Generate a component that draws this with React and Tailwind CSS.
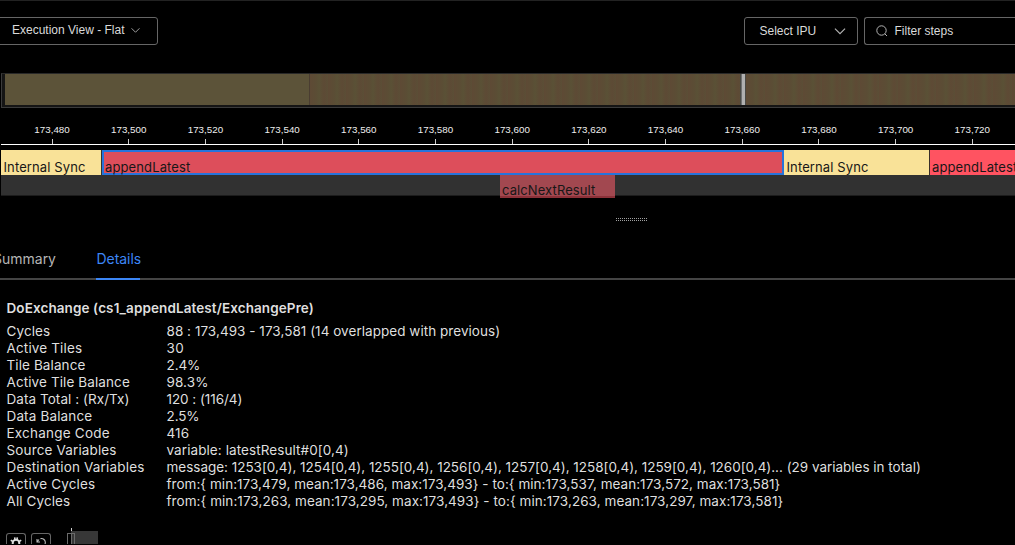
import React from "react";

const ticks = ["173,480", "173,500", "173,520", "173,540", "173,560", "173,580", "173,600", "173,620", "173,640", "173,660", "173,680", "173,700", "173,720"];

const details = [
  ["Cycles", "88 : 173,493 - 173,581 (14 overlapped with previous)", "tracking-[0.1px]", "tracking-[0.04px]"],
  ["Active Tiles", "30", "tracking-[0.15px]", "tracking-[0.5px]"],
  ["Tile Balance", "2.4%", "tracking-[0.1px]", "tracking-[-0.1px]"],
  ["Active Tile Balance", "98.3%", "tracking-[0.1px]", "tracking-[0.1px]"],
  ["Data Total : (Rx/Tx)", "120 : (116/4)", "tracking-[0.06px]", "tracking-[-0.05px]"],
  ["Data Balance", "2.5%", "tracking-[0.15px]", "tracking-[-0.1px]"],
  ["Exchange Code", "416", "tracking-[0.22px]", "tracking-[0.1px]"],
  ["Source Variables", "variable: latestResult#0[0,4)", "tracking-[0.14px]", "tracking-[0.08px]"],
  ["Destination Variables", "message: 1253[0,4), 1254[0,4), 1255[0,4), 1256[0,4), 1257[0,4), 1258[0,4), 1259[0,4), 1260[0,4)... (29 variables in total)", "tracking-[0.17px]", "tracking-[-0.017px]"],
  ["Active Cycles", "from:{ min:173,479, mean:173,486, max:173,493} - to:{ min:173,537, mean:173,572, max:173,581}", "tracking-[0.15px]", "tracking-[0.035px]"],
  ["All Cycles", "from:{ min:173,263, mean:173,295, max:173,493} - to:{ min:173,263, mean:173,297, max:173,581}", "tracking-[0.1px]", "tracking-[0.06px]"],
];

function Chevron({ className }) {
  return (
    <svg className={className} viewBox="0 0 12 8" fill="none" stroke="#b4b4b4" strokeWidth="1">
      <path d="M1.5 1.5 6 6l4.5-4.5" />
    </svg>
  );
}

function Toolbar() {
  return (
    <div className="mt-4 flex h-7 shrink-0 font-['Liberation_Sans',sans-serif] text-[12px] text-[#dadada]">
      <button className="-ml-1 flex w-[162px] items-center rounded-[3px] border border-[#666] pl-[15px] pb-[3px]">
        <span className="whitespace-nowrap">Execution View - Flat</span>
        <Chevron className="mt-px ml-[5px] h-[7px] w-[11px]" />
      </button>
      <button className="ml-[586px] flex w-[114px] items-center rounded-[3px] border border-[#666] pl-[14.5px]">
        <span className="whitespace-nowrap">Select IPU</span>
        <Chevron className="ml-[17px] h-[9px] w-[14px]" />
      </button>
      <div className="ml-1.5 flex flex-1 items-center rounded-l-[3px] border border-r-0 border-[#666] pl-[10.5px]">
        <svg className="h-3 w-3" viewBox="0 0 12 12" fill="none" stroke="#b4b4b4" strokeWidth="1">
          <circle cx="5.5" cy="5.5" r="4.7" />
          <path d="m8.8 8.8 2.2 2.2" />
        </svg>
        <span className="ml-[7px] whitespace-nowrap">Filter steps</span>
      </div>
    </div>
  );
}

function Overview() {
  return (
    <div className="mt-7 ml-px flex h-[35px] shrink-0 border border-r-0 border-t-[#292929] border-b-[#3b3b3b] border-l-[#3b3b3b] bg-[#151515] pl-[3px] pb-0.5">
      <div className="w-[304px] bg-[#5c5339]" />
      <div className="w-px bg-[#4a3d31]" />
      <div className="w-[430px] bg-[repeating-linear-gradient(90deg,#5e4a35_0px,#5b4d35_6px,#5a5136_9px,#5d4a35_14px,#5b4e36_18px)]" />
      <div className="flex w-1.5 shrink-0 border-x border-[#4a4a45] bg-[#707070] pl-px">
        <div className="flex-1 bg-[#b0b0b0]" />
      </div>
      <div className="flex-1 bg-[repeating-linear-gradient(90deg,#5e4a35_0px,#5b4d35_7px,#5a5136_10px,#5e4a35_15px,#5b4e36_19px)]" />
    </div>
  );
}

function Timeline() {
  return (
    <div className="ml-px shrink-0 overflow-hidden">
      <div className="flex h-[37px] border-b border-white pl-[12.7px] font-['Liberation_Sans',sans-serif] text-[9.8px] text-[#eee]">
        {ticks.map((t) => (
          <div key={t} className="flex w-[76.7px] shrink-0 flex-col items-center justify-between pt-[14px]">
            <span className="leading-[15px]">{t}</span>
            <span className="h-[5px] w-px bg-white/80" />
          </div>
        ))}
      </div>
      <div className="mt-[5px] flex h-[25px] overflow-hidden bg-[#313131] text-[13px] leading-[16px] tracking-[0.12px] whitespace-nowrap text-[#171717]">
        <div className="flex w-[100px] shrink-0 items-end bg-[#f9e298] pl-[2.5px]">Internal Sync</div>
        <div className="ml-px flex w-[682px] shrink-0 items-end border-2 border-[#2674dc] bg-[#dd4e5b] pl-px"><span className="-mb-0.5">appendLatest</span></div>
        <div className="flex w-[146px] shrink-0 items-end border-r border-[#382e28] bg-[#f9e298] pl-[2.5px]">Internal Sync</div>
        <div className="flex w-[86px] shrink-0 items-end bg-[#ff5361] pl-0.5">appendLatest</div>
      </div>
      <div className="flex h-[23px]">
        <div className="h-[21px] w-[499px] border-b border-[#1c1c1c] bg-[#313131]" />
        <div className="flex h-[23px] w-[115px] items-end border-b-2 border-[#8c3139] bg-[#a24850] pl-0.5 text-[13px] leading-[16px] tracking-[0.1px] whitespace-nowrap text-[#171717]"><span className="-mb-0.5">calcNextResult</span></div>
        <div className="h-[21px] flex-1 border-b border-[#1c1c1c] bg-[#313131]" />
      </div>
    </div>
  );
}

function ResizeHandle() {
  return (
    <div className="mt-5 ml-[616px] flex h-[3px] w-8 shrink-0 flex-col justify-between">
      <div className="h-px bg-[repeating-linear-gradient(90deg,#a0a0a0_0px,#a0a0a0_1px,#000_1px,#000_2px)]" />
      <div className="h-px bg-[repeating-linear-gradient(90deg,#a0a0a0_0px,#a0a0a0_1px,#000_1px,#000_2px)]" />
    </div>
  );
}

function Tabs() {
  return (
    <div className="mt-[19px] flex h-10 shrink-0 border-b-2 border-[#444] text-[14px] leading-[38px] whitespace-nowrap text-[#b5b5b5]">
      <div className="-ml-[9px] w-[65px] text-right">Summary</div>
      <div className="ml-10 h-10 w-11 border-b-2 border-[#3c86f6] pl-[0.5px] tracking-[-0.05px] text-[#3c86f6]">Details</div>
    </div>
  );
}

function Details() {
  return (
    <div className="shrink-0 pt-[18px] pl-[6.5px] text-[13.5px] text-[#dfdfdf]">
      <h2 className="h-5 leading-5 font-semibold tracking-[0.1px] whitespace-nowrap">DoExchange (cs1_appendLatest/ExchangePre)</h2>
      <dl className="mt-[5px]">
        {details.map(([label, value, labelCls, valueCls]) => (
          <div key={label} className="flex h-[17px] leading-[17px] whitespace-nowrap">
            <dt className="w-40 shrink-0"><span className={labelCls}>{label}</span></dt>
            <dd><span className={valueCls}>{value}</span></dd>
          </div>
        ))}
      </dl>
    </div>
  );
}

function BottomBar() {
  return (
    <div className="mt-[18px] flex h-[16px] shrink-0 items-end overflow-hidden pl-1.5">
      <div className="flex h-[11px] w-5 justify-center rounded-t-[3px] border border-b-0 border-[#666] pt-[3px]">
        <svg className="h-3 w-3 shrink-0" viewBox="0 0 12 12" fill="none" stroke="#ddd">
          <circle cx="6" cy="6" r="3.3" strokeWidth="2" />
          <path d="M4.7 .3 5 3M7.3 .3 7 3M.8 3.2l2 1.3M11.2 3.2l-2 1.3M1 9l1.7-1M11 9 9.3 8M6 10v2" strokeWidth="1.6" />
        </svg>
      </div>
      <div className="ml-[5px] flex h-[11px] w-5 justify-center rounded-t-[3px] border border-b-0 border-[#666] pt-[3px]">
        <svg className="h-3 w-3 shrink-0" viewBox="0 0 12 12" fill="none" stroke="#bbb" strokeWidth="1.1">
          <path d="M2 2v3h3M2.3 4.7M5.5 1.6C8 1 10 2.8 10.3 5c.2 3-2 5-4.300 5M2 5l2-2.500" />
        </svg>
      </div>
      <div className="ml-4 h-[11px] w-1 border border-r-0 border-b-0 border-[#6a6a6a]" />
      <div className="flex h-4 w-[27px] flex-col">
        <div className="h-[3px] w-px border-l border-dashed border-[#ccc]" />
        <div className="flex h-[14px] flex-1 items-end bg-[#373737]">
          <div className="h-[11px] w-1 border border-b-0 border-[#6a6a6a]" />
        </div>
      </div>
    </div>
  );
}

export default function App() {
  return (
    <main className="flex h-[545px] w-[1015px] flex-col overflow-hidden border-t border-[#222] bg-black font-['Inter',sans-serif]">
      <Toolbar />
      <Overview />
      <Timeline />
      <ResizeHandle />
      <Tabs />
      <Details />
      <BottomBar />
    </main>
  );
}
